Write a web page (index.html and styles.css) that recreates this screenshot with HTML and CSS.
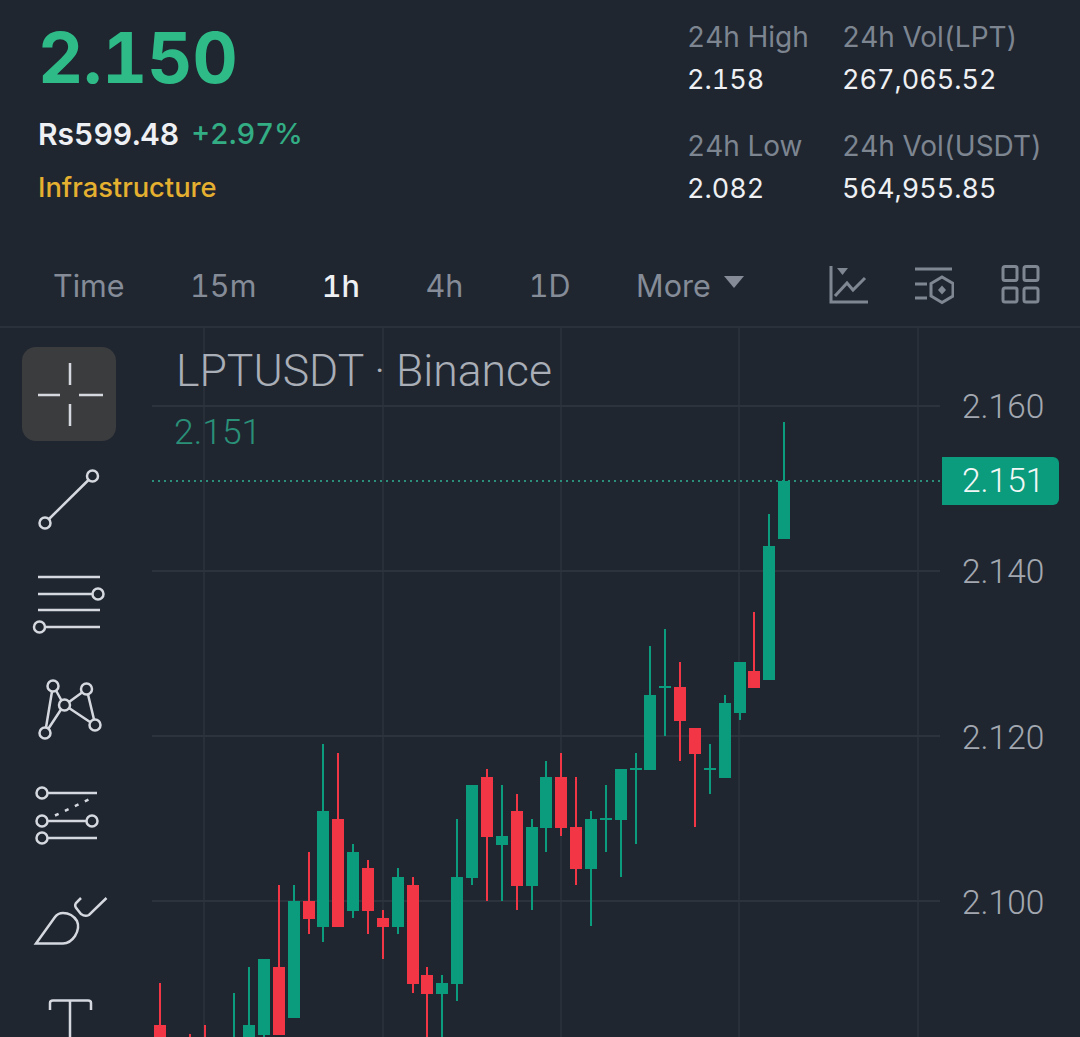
FILE: index.html
```html
<!DOCTYPE html>
<html lang="en">
<head>
    <meta charset="UTF-8">
    <meta name="viewport" content="width=device-width, initial-scale=1.0">
    <title>LPTUSDT</title>
    <link rel="stylesheet" href="styles.css">
</head>
<body>
    <header class="summary">
        <div class="quote">
            <div class="last-price">2.150</div>
            <div class="fiat-row">
                <span class="fiat">Rs599.48</span>
                <span class="change">+2.97%</span>
            </div>
            <div class="sector">Infrastructure</div>
        </div>
        <div class="stats">
            <div class="stat"><span class="stat-label">24h High</span><span class="stat-value">2.158</span></div>
            <div class="stat"><span class="stat-label">24h Vol(LPT)</span><span class="stat-value">267,065.52</span></div>
            <div class="stat"><span class="stat-label">24h Low</span><span class="stat-value">2.082</span></div>
            <div class="stat"><span class="stat-label">24h Vol(USDT)</span><span class="stat-value">564,955.85</span></div>
        </div>
    </header>

    <nav class="intervals">
        <span class="interval">Time</span>
        <span class="interval">15m</span>
        <span class="interval active">1h</span>
        <span class="interval">4h</span>
        <span class="interval">1D</span>
        <span class="interval more">More <i class="caret"></i></span>
        <div class="chart-actions">
            <svg class="action-icon" width="40" height="40" viewBox="0 0 40 40">
                <path d="M3 1V37H40" />
                <path d="M7 31L19 18L25 25L37 13" />
                <path class="fill" d="M9 3H20L14.500 10Z" />
            </svg>
            <svg class="action-icon" width="40" height="40" viewBox="0 0 40 40">
                <path d="M1 4H38M1 19H13M1 33H13" />
                <path d="M28 12L39 18.500V31L28 37.500L17 31V18.500Z" />
                <path class="fill" d="M28 20.500L32 25L28 29.500L24 25Z" />
            </svg>
            <svg class="action-icon" width="40" height="40" viewBox="0 0 40 40">
                <rect x="3" y="1.500" width="14" height="14" rx="2" />
                <rect x="24" y="1.500" width="14" height="14" rx="2" />
                <rect x="3" y="23" width="14" height="14" rx="2" />
                <rect x="24" y="23" width="14" height="14" rx="2" />
            </svg>
        </div>
    </nav>

    <main class="chart">
        <aside class="tools">
            <div class="tool selected">
                <svg viewBox="0 0 94 94"><path d="M48 16V38M48 57V79M16 48H38M57 48H81" /></svg>
            </div>
            <div class="tool">
                <svg viewBox="0 0 94 94">
                    <circle cx="70.500" cy="23" r="5.500" />
                    <circle cx="23" cy="70" r="5.500" />
                    <path d="M66.500 27L27 66" />
                </svg>
            </div>
            <div class="tool">
                <svg viewBox="0 0 94 94">
                    <path d="M16 18H78M16 35H70M16 51H78M23.500 68H78" />
                    <circle cx="76" cy="35" r="5.500" />
                    <circle cx="17.500" cy="68" r="5.500" />
                </svg>
            </div>
            <div class="tool">
                <svg viewBox="0 0 94 94">
                    <circle cx="31" cy="21" r="5.500" />
                    <circle cx="64.500" cy="24" r="5.500" />
                    <circle cx="42.500" cy="40" r="5.500" />
                    <circle cx="73" cy="60" r="5.500" />
                    <circle cx="23" cy="68" r="5.500" />
                    <path d="M30 26.500L24 62.500M34 25.500L39.500 35.500M47 37L60 27.500M66 29.500L72 54.500M47 43L68 57M39 44.500L26.500 63.500" />
                </svg>
            </div>
            <div class="tool">
                <svg viewBox="0 0 94 94">
                    <circle cx="20" cy="22" r="5.500" />
                    <circle cx="20" cy="50" r="5.500" />
                    <circle cx="70" cy="50" r="5.500" />
                    <circle cx="20" cy="67" r="5.500" />
                    <path d="M25.500 22H75M25.500 50H64.500M25.500 67H75" />
                    <path d="M33 44.500L70 27" stroke-dasharray="4 7" />
                </svg>
            </div>
            <div class="tool">
                <svg viewBox="0 0 94 94">
                    <path d="M14 66.500L33 40Q36 36 41 36Q50 36 55 44Q58 51 53 59Q48 66.500 41 66.500Z" />
                    <path d="M59 21L54 26Q52 29 55 32L59 37Q63 40 67 38L84.500 21" />
                </svg>
            </div>
            <div class="tool">
                <svg viewBox="0 0 94 94"><path d="M28 27V20Q28 17.500 31 17.500H66Q69 17.500 69 20V27M48 17.500V94" /></svg>
            </div>
        </aside>

        <section class="plot">
            <svg id="candles" class="candles" viewBox="152 328 928 709"></svg>
            <div class="symbol">LPTUSDT · Binance</div>
            <div class="last-value">2.151</div>
            <span class="axis-label label-160">2.160</span>
            <span class="axis-label label-140">2.140</span>
            <span class="axis-label label-120">2.120</span>
            <span class="axis-label label-100">2.100</span>
            <span class="price-badge">2.151</span>
        </section>
    </main>

    <script src="chart.js"></script>
</body>
</html>
```

FILE: styles.css
```css
* {
    box-sizing: border-box;
}
html, body {
    height: 100%;
}
body {
    margin: 0;
    overflow: hidden;
    background-color: #1f2630;
    color: #eef0f3;
    font-family: 'Inter', sans-serif;
    font-variant-numeric: tabular-nums;
}

/* top summary */
.summary {
    display: flex;
    justify-content: space-between;
    height: 256px;
    padding: 0 38px 0 38px;
}
.last-price {
    margin-top: 13px;
    font-size: 70px;
    line-height: 90px;
    font-weight: 700;
    color: #2fbb88;
}
.fiat-row {
    display: flex;
    gap: 12px;
    margin-top: 13px;
    font-size: 29px;
    line-height: 36px;
}
.fiat {
    font-size: 30px;
    font-weight: 600;
    color: #eef0f3;
}
.change {
    font-weight: 500;
    color: #33ad84;
}
.sector {
    margin-top: 19px;
    font-size: 27.300px;
    line-height: 34px;
    font-weight: 500;
    color: #e5b02f;
}
.stats {
    display: grid;
    grid-template-columns: 155px auto;
    grid-auto-rows: 109px;
    padding-top: 20px;
}
.stat {
    display: flex;
    flex-direction: column;
    gap: 9px;
    font-size: 28px;
    line-height: 34px;
}
.stat-label {
    color: #7d8591;
}
.stat-value {
    font-size: 27px;
    color: #eef0f3;
}

/* interval tabs */
.intervals {
    display: flex;
    align-items: center;
    gap: 65.500px;
    height: 72px;
    padding: 0 40px 12px 53px;
    border-bottom: 2px solid #2a313b;
    font-size: 30.500px;
    color: #858c98;
}
.interval.active {
    font-weight: 500;
    color: #eef0f3;
}
.more {
    display: flex;
    align-items: center;
    gap: 13px;
}
.caret {
    width: 0;
    height: 0;
    margin-bottom: 6px;
    border-left: 10px solid transparent;
    border-right: 10px solid transparent;
    border-top: 12px solid #858c98;
}
.chart-actions {
    display: flex;
    gap: 46px;
    margin-left: auto;
}
.action-icon {
    fill: none;
    stroke: #7f8793;
    stroke-width: 3;
}
.action-icon .fill {
    fill: #7f8793;
    stroke: none;
}

/* chart */
.chart {
    display: flex;
    height: 709px;
}
.tools {
    display: flex;
    flex-direction: column;
    flex: 0 0 152px;
    gap: 12px;
    padding: 19px 0 0 22px;
}
.tool {
    flex: 0 0 94px;
    width: 94px;
    border-radius: 14px;
}
.tool.selected {
    background-color: #3b3c3e;
}
.tool svg {
    display: block;
    fill: none;
    stroke: #d5d9df;
    stroke-width: 2.500;
}
.plot {
    position: relative;
    flex: 1;
}
.candles {
    position: absolute;
    top: 0;
    left: 0;
    width: 928px;
    height: 709px;
}
.symbol {
    position: absolute;
    top: 16px;
    left: 24px;
    font-family: 'Roboto', sans-serif;
    font-weight: 300;
    font-size: 44.500px;
    line-height: 54px;
    color: #a9aeb7;
}
.last-value {
    position: absolute;
    top: 82px;
    left: 22px;
    font-family: 'Roboto', sans-serif;
    font-weight: 300;
    font-size: 35.500px;
    line-height: 44px;
    color: #2a9078;
}
.axis-label,
.price-badge {
    position: absolute;
    font-family: 'Roboto', sans-serif;
    font-weight: 300;
    font-size: 33.500px;
    line-height: 44px;
}
.axis-label {
    left: 810px;
    color: #a3a8b0;
}
.label-160 { top: 57px; }
.label-140 { top: 222px; }
.label-120 { top: 388px; }
.label-100 { top: 553px; }
.price-badge {
    top: 129px;
    left: 790px;
    width: 117px;
    height: 48px;
    padding: 2px 0 0 20px;
    border-radius: 0 6px 6px 0;
    background-color: #0b9b7d;
    color: #f2f7f6;
}
```

FILE: chart.js
```js
const svg = document.getElementById('candles');
const NS = 'http://www.w3.org/2000/svg';

const GREEN = '#0b9b7d';
const RED = '#f23645';

// [slot, colour, wick top, body top, body bottom, wick bottom] in page pixels
const candles = [
    [0, RED, 983, 1025, 1050, 1050],
    [2, RED, 1034, 1050, 1050, 1050],
    [3, RED, 1025, 1050, 1050, 1050],
    [5, GREEN, 993, 1050, 1050, 1050],
    [6, GREEN, 967, 1025, 1050, 1050],
    [7, GREEN, 959, 959, 1035, 1050],
    [8, RED, 885, 967, 1035, 1035],
    [9, GREEN, 885, 901, 1018, 1018],
    [10, RED, 852, 901, 919, 934],
    [11, GREEN, 744, 811, 927, 942],
    [12, RED, 753, 819, 927, 927],
    [13, GREEN, 844, 852, 911, 918],
    [14, RED, 860, 868, 911, 934],
    [15, RED, 910, 918, 927, 959],
    [16, GREEN, 868, 877, 927, 934],
    [17, RED, 877, 885, 984, 993],
    [18, RED, 967, 975, 994, 1050],
    [19, GREEN, 975, 983, 994, 1050],
    [20, GREEN, 819, 877, 984, 1001],
    [21, GREEN, 785, 785, 878, 885],
    [22, RED, 769, 777, 837, 901],
    [23, GREEN, 785, 836, 845, 901],
    [24, RED, 794, 811, 886, 910],
    [25, GREEN, 819, 827, 886, 910],
    [26, GREEN, 761, 777, 828, 852],
    [27, RED, 753, 777, 828, 836],
    [28, RED, 777, 827, 869, 885],
    [29, GREEN, 811, 819, 869, 926],
    [30, GREEN, 785, 818, 820, 852],
    [31, GREEN, 769, 769, 820, 877],
    [32, GREEN, 753, 768, 770, 844],
    [33, GREEN, 646, 695, 770, 770],
    [34, GREEN, 629, 686, 688, 736],
    [35, RED, 662, 687, 721, 761],
    [36, RED, 728, 728, 754, 827],
    [37, GREEN, 744, 768, 770, 794],
    [38, GREEN, 695, 703, 778, 778],
    [39, GREEN, 662, 662, 713, 720],
    [40, RED, 612, 671, 688, 688],
    [41, GREEN, 514, 546, 680, 680],
    [42, GREEN, 422, 481, 539, 539]
];

function addLine(x1, y1, x2, y2, stroke, extra) {
    const line = document.createElementNS(NS, 'line');
    line.setAttribute('x1', x1);
    line.setAttribute('y1', y1);
    line.setAttribute('x2', x2);
    line.setAttribute('y2', y2);
    line.setAttribute('stroke', stroke);
    line.setAttribute('stroke-width', 2);
    if (extra) line.setAttribute('stroke-dasharray', extra);
    svg.appendChild(line);
}

function addRect(x, y, width, height, fill) {
    const rect = document.createElementNS(NS, 'rect');
    rect.setAttribute('x', x);
    rect.setAttribute('y', y);
    rect.setAttribute('width', width);
    rect.setAttribute('height', height);
    rect.setAttribute('fill', fill);
    svg.appendChild(rect);
}

[204, 383, 561, 739, 918].forEach(x => addLine(x, 328, x, 1037, '#292f39'));
[406, 571, 736, 901].forEach(y => addLine(152, y, 940, y, '#2c333d'));
addLine(152, 481, 940, 481, '#2b8f7b', '2 4');

candles.forEach(([slot, colour, wickTop, top, bottom, wickBottom]) => {
    const x = Math.round(160 + slot * 14.86);
    addRect(x - 1, wickTop, 2, wickBottom - wickTop, colour);
    addRect(x - 6, top, 12, bottom - top, colour);
});
```
